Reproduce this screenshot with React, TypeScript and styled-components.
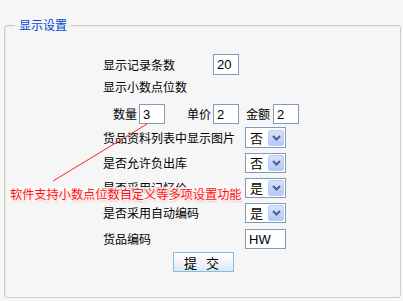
import styled, { createGlobalStyle } from 'styled-components';

const GlobalStyle = createGlobalStyle`
  html, body {
    margin: 0;
    padding: 0;
    background: #f6f6f6;
  }
  body {
    width: 403px;
    height: 301px;
    overflow: hidden;
    font-family: "Noto Sans CJK SC", "DejaVu Sans", sans-serif;
    font-size: 12px;
    color: #000;
  }
`;

const Page = styled.div`
  position: relative;
  width: 403px;
  height: 301px;
  padding: 18px 2px 0 4px;
  box-sizing: border-box;
`;

const Fieldset = styled.fieldset`
  margin: 0;
  padding: 0;
  height: 280px;
  box-sizing: border-box;
  border: 1px solid #cfcfbd;
  border-radius: 3px;
  box-shadow: inset 1px 1px 0 #ecece2;
`;

const Legend = styled.legend`
  margin-left: 10px;
  padding: 0 4px;
  color: #0046d5;
  font-size: 12px;
  line-height: 14px;
`;

const Rows = styled.div`
  display: flex;
  flex-direction: column;
  padding-top: 22px;
`;

const Row = styled.div<{ $indent?: number; $h?: number; $top?: number }>`
  display: flex;
  align-items: center;
  height: ${(p) => p.$h ?? 20}px;
  margin-top: ${(p) => p.$top ?? 0}px;
  padding-left: ${(p) => p.$indent ?? 98}px;
`;

const Label = styled.span<{ $w?: number; $gap?: number }>`
  flex-shrink: 0;
  width: ${(p) => (p.$w ? `${p.$w}px` : 'auto')};
  margin-left: ${(p) => p.$gap ?? 0}px;
  line-height: 14px;
  white-space: nowrap;
`;

const TextInput = styled.input<{ $w?: number; $h?: number; $gap?: number }>`
  width: ${(p) => p.$w ?? 26}px;
  height: ${(p) => p.$h ?? 20}px;
  margin: 0 0 0 ${(p) => p.$gap ?? 0}px;
  padding: 0 3px;
  box-sizing: border-box;
  border: 1px solid #7f9db9;
  background: #fff;
  font-family: "Liberation Sans", Arial, sans-serif;
  font-size: 13px;
  color: #000;
  outline: none;
`;

const SelectBox = styled.div`
  display: flex;
  align-items: center;
  justify-content: space-between;
  width: 41px;
  height: 100%;
  box-sizing: border-box;
  border: 1px solid #7f9db9;
  background: #fff;
  padding: 0 1px 0 4px;
`;

const SelectText = styled.span`
  font-size: 13px;
  line-height: 14px;
`;

const DropButton = styled.span`
  display: flex;
  align-items: center;
  justify-content: center;
  width: 16px;
  height: 16px;
  border-radius: 2px;
  background: linear-gradient(#d6e3fe, #b4c8f6);
  border: 1px solid #bccdf5;
  box-sizing: border-box;
`;

const ButtonRow = styled.div`
  display: flex;
  justify-content: center;
  margin-top: 3px;
  padding-left: 1px;
`;

const SubmitButton = styled.button`
  width: 61px;
  height: 20px;
  padding: 0;
  border: 1px solid #7fbfe4;
  background: linear-gradient(#ffffff 0%, #f4f7fb 45%, #dde8f5 100%);
  font-family: "Noto Sans CJK SC", sans-serif;
  font-size: 13px;
  letter-spacing: 3px;
  color: #000;
  cursor: pointer;
`;

const Note = styled.div`
  position: absolute;
  left: 9px;
  top: 187px;
  color: #ff1010;
  font-size: 12.2px;
  line-height: 14px;
  white-space: nowrap;
  text-shadow: 0 0 2px #fff, 0 0 2px #fff, 1px 2px 2px rgba(230, 90, 90, 0.45);
  background: rgba(255, 255, 255, 0.7);
  padding: 0 1px;
`;

const Pointer = styled.svg`
  position: absolute;
  left: 0;
  top: 0;
  pointer-events: none;
`;

function Select({ value }: { value: string }) {
  return (
    <SelectBox>
      <SelectText>{value}</SelectText>
      <DropButton>
        <svg width="9" height="6" viewBox="0 0 9 6">
          <path d="M1 1 L4.5 4.5 L8 1" fill="none" stroke="#4d6185" strokeWidth="2" />
        </svg>
      </DropButton>
    </SelectBox>
  );
}

export default function App() {
  return (
    <>
      <GlobalStyle />
      <Page>
        <Fieldset>
          <Legend>显示设置</Legend>
          <Rows>
            <Row $h={21}>
              <Label $w={110}>显示记录条数</Label>
              <TextInput $h={21} defaultValue="20" />
            </Row>
            <Row $top={2}>
              <Label>显示小数点位数</Label>
            </Row>
            <Row $indent={108} $top={7}>
              <Label>数量</Label>
              <TextInput $gap={2} defaultValue="3" />
              <Label $gap={22}>单价</Label>
              <TextInput $gap={2} defaultValue="2" />
              <Label $gap={7}>金额</Label>
              <TextInput $gap={3} defaultValue="2" />
            </Row>
            <Row $h={21} $top={3}>
              <Label $w={142}>货品资料列表中显示图片</Label>
              <Select value="否" />
            </Row>
            <Row $top={5}>
              <Label $w={142}>是否允许负出库</Label>
              <Select value="否" />
            </Row>
            <Row $top={5}>
              <Label $w={142}>是否采用记忆价</Label>
              <Select value="是" />
            </Row>
            <Row $top={5}>
              <Label $w={142}>是否采用自动编码</Label>
              <Select value="是" />
            </Row>
            <Row $top={6}>
              <Label $w={142}>货品编码</Label>
              <TextInput $w={41} defaultValue="HW" />
            </Row>
            <ButtonRow>
              <SubmitButton type="button">提 交</SubmitButton>
            </ButtonRow>
          </Rows>
        </Fieldset>
        <Pointer width="403" height="301">
          <line x1="147" y1="124" x2="53" y2="181" stroke="#ff2020" strokeWidth="1" />
        </Pointer>
        <Note>软件支持小数点位数自定义等多项设置功能</Note>
      </Page>
    </>
  );
}
